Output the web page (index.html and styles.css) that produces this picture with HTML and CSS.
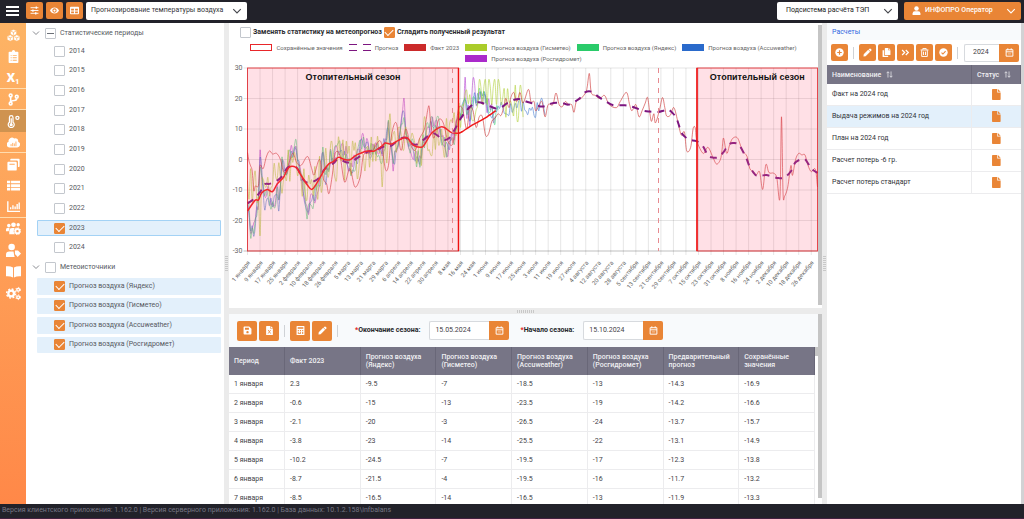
FILE: index.html
```html
<!DOCTYPE html>
<html lang="ru">
<head>
<meta charset="utf-8">
<title>Прогнозирование температуры воздуха</title>
<link rel="stylesheet" href="styles.css">
</head>
<body>
<svg class="sprite" aria-hidden="true">
  <symbol id="i-sliders" viewBox="0 0 16 16"><path d="M1 3h14M1 8h14M1 13h14" stroke="currentColor" stroke-width="1.6"/><path d="M10 1h2.4v4H10zM4 6h2.4v4H4zM9 11h2.4v4H9z" fill="currentColor"/></symbol>
  <symbol id="i-eye" viewBox="0 0 16 16"><path fill="currentColor" fill-rule="evenodd" d="M8 2.5C4.500 2.500 1.600 4.700 0 8c1.600 3.300 4.500 5.500 8 5.500s6.400-2.200 8-5.500c-1.600-3.300-4.500-5.500-8-5.500zM8 4.200a3.800 3.800 0 1 1 0 7.600 3.800 3.800 0 0 1 0-7.600zM8 6a2 2 0 1 0 0 4 2 2 0 0 0 0-4z"/></symbol>
  <symbol id="i-table" viewBox="0 0 16 16"><path fill="currentColor" fill-rule="evenodd" d="M1.500 1.500h13q1.500 0 1.500 1.500v10q0 1.500-1.500 1.500h-13Q0 14.500 0 13V3q0-1.500 1.500-1.500zM2 5v3h5V5zM9 5v3h5V5zM2 9.700v3h5v-3zM9 9.700v3h5v-3z"/></symbol>
  <symbol id="i-down" viewBox="0 0 16 16"><path d="M2 5l6 6 6-6" fill="none" stroke="currentColor" stroke-width="1.800"/></symbol>
  <symbol id="i-user" viewBox="0 0 16 16"><circle cx="8" cy="4.300" r="4" fill="currentColor"/><path fill="currentColor" d="M1 16v-2.500Q1 9.500 5 9.500h6q4 0 4 4V16z"/></symbol>
  <symbol id="i-cubes" viewBox="0 0 16 16"><path fill="currentColor" stroke="#fdb263" stroke-width=".7" d="M8 .5l3.800 1.700v4.400L8 8.300 4.200 6.600V2.200zM4 7.200l3.800 1.700v4.400L4 15.200.2 13.300V8.900zM12 7.200l3.800 1.700v4.400L12 15.200l-3.800-1.900V8.900z"/><path fill="none" stroke="#fdb263" stroke-width=".9" d="M5 2.800l3 1.300 3-1.300M8 4v3M1.200 9.500L4 10.800l3-1.300M4 11v3M9.200 9.500l2.800 1.300 3-1.300M12 11v3"/></symbol>
  <symbol id="i-clip" viewBox="0 0 16 16"><path fill="currentColor" fill-rule="evenodd" d="M3 2h3a2 2 0 0 1 4 0h3q1 0 1 1v12q0 1-1 1H3q-1 0-1-1V3q0-1 1-1zM4.500 6v1.200h1.200V6zM7 6v1.200h5V6zM4.500 9v1.200h1.200V9zM7 9v1.200h5V9zM4.500 12v1.200h1.200V12zM7 12v1.200h5V12z"/></symbol>
  <symbol id="i-branch" viewBox="0 0 16 16"><g fill="none" stroke="currentColor" stroke-width="2"><circle cx="4.500" cy="3" r="1.700"/><circle cx="12" cy="4.500" r="1.700"/><circle cx="4.500" cy="13" r="1.700"/><path d="M4.500 5v6M12 6.500q0 2.500-3 2.700-4 .3-4.300 2"/></g></symbol>
  <symbol id="i-thermo" viewBox="0 0 16 16"><path fill="none" stroke="currentColor" stroke-width="1.500" d="M3 8.800V3a2.200 2.200 0 0 1 4.400 0v5.800a3.700 3.700 0 1 1-4.400 0z"/><path stroke="currentColor" stroke-width="1.600" d="M5.200 4v7"/><circle cx="5.200" cy="12" r="1.900" fill="currentColor"/><circle cx="12.800" cy="3.500" r="1.900" fill="none" stroke="currentColor" stroke-width="1.600"/></symbol>
  <symbol id="i-cloud" viewBox="0 0 16 16"><path fill="currentColor" d="M3.500 14A3.500 3.500 0 0 1 2 7.200 4.200 4.200 0 0 1 8.800 3a3.500 3.500 0 0 1 4.900 4A3.600 3.600 0 0 1 12.700 14z"/><path stroke="#ffaa5b" stroke-width="1.100" d="M5 12.500V10M7 12.500V8.500M9 12.500V9.200M11 12.500V6.800"/></symbol>
  <symbol id="i-books" viewBox="0 0 16 16"><path fill="currentColor" d="M5 1h9.500q1 0 1 1v8q0 1-1 1h-1V4.500Q13.500 3 12 3H4V2q0-1 1-1z"/><path fill="currentColor" fill-rule="evenodd" d="M1.500 4.500h9q1.500 0 1.500 1.500v8q0 1.500-1.500 1.500h-9Q.5 15.500.5 14V6q0-1.500 1-1.500zM3 7v1.300h6.500V7z"/></symbol>
  <symbol id="i-list" viewBox="0 0 16 16"><path fill="currentColor" d="M0 2h4v3.300H0zM5 2h11v3.300H5zM0 6.400h4v3.300H0zM5 6.400h11v3.300H5zM0 10.800h4V14H0zM5 10.800h11V14H5z"/></symbol>
  <symbol id="i-bars" viewBox="0 0 16 16"><path fill="none" stroke="currentColor" stroke-width="1.700" d="M1 1.500V14h15"/><path stroke="currentColor" stroke-width="1.700" d="M4.500 11.500V9M7.300 11.500V6.500M10 11.500V8M12.500 11.500V5M15 11.500V3"/></symbol>
  <symbol id="i-group" viewBox="0 0 16 16"><g fill="currentColor"><circle cx="3" cy="4.800" r="1.900"/><circle cx="8" cy="4" r="2.500"/><circle cx="13" cy="4" r="1.800"/><path d="M0 11V9q0-1.800 2-1.800h2Q3 8.500 3 11zM3.500 14v-3q0-3.500 3-3.500h2.800Q7 11 9.500 14z"/></g><circle cx="12.200" cy="10.800" r="2.300" fill="none" stroke="currentColor" stroke-width="2"/><circle cx="12.200" cy="10.800" r="3.600" fill="none" stroke="currentColor" stroke-width="1" stroke-dasharray="1.400 1.400"/></symbol>
  <symbol id="i-usertag" viewBox="0 0 16 16"><g fill="currentColor"><circle cx="6" cy="4.300" r="3.500"/><path d="M0 15v-2.500Q0 9 3.500 9H8l1 5.500.5.500z"/><path d="M9.500 8h3.300l3.200 3.200-3.500 3.800-3-3.300z"/></g></symbol>
  <symbol id="i-book" viewBox="0 0 16 16"><path fill="currentColor" d="M0 2.500Q4.500 2 7.500 3.800v10.500Q4.500 12.700 0 13zM16 2.500Q11.500 2 8.500 3.800v10.500q3-1.600 7.500-1.300z"/></symbol>
  <symbol id="i-cogs" viewBox="0 0 16 16"><g fill="none" stroke="currentColor"><circle cx="5.500" cy="8" r="3" stroke-width="2.400"/><circle cx="5.500" cy="8" r="4.800" stroke-width="1.500" stroke-dasharray="2 1.770"/><circle cx="13" cy="4" r="1.500" stroke-width="1.500"/><circle cx="13" cy="4" r="2.500" stroke-width="1" stroke-dasharray="1.300 1.300"/><circle cx="13" cy="12" r="1.500" stroke-width="1.500"/><circle cx="13" cy="12" r="2.500" stroke-width="1" stroke-dasharray="1.300 1.300"/></g></symbol>
  <symbol id="i-save" viewBox="0 0 16 16"><path fill="currentColor" fill-rule="evenodd" d="M2.500 1H11l4 4v8.500q0 1.500-1.500 1.500h-11Q1 15 1 13.500v-11Q1 1 2.500 1zM3.500 3.300V6.500h7V3.300zM8 8.800a2.100 2.100 0 1 0 0 4.200 2.100 2.100 0 0 0 0-4.200z"/></symbol>
  <symbol id="i-excel" viewBox="0 0 16 16"><path fill="currentColor" d="M3 0h6v4.500h5V15q0 1-1 1H3q-1 0-1-1V1q0-1 1-1zM10 0l4 3.700h-4z"/><path stroke="#e98536" stroke-width="1.400" d="M5.500 7l4.600 6.500M10.100 7l-4.600 6.500"/></symbol>
  <symbol id="i-calc" viewBox="0 0 16 16"><path fill="currentColor" fill-rule="evenodd" d="M2 0h12q1 0 1 1v14q0 1-1 1H2q-1 0-1-1V1q0-1 1-1zM3 2v3h10V2zM3.200 7v1.800H5V7zM7 7v1.800h1.900V7zM11 7v1.800h1.800V7zM3.200 10.200V12H5v-1.800zM7 10.200V12h1.900v-1.800zM11 10.200v4h1.800v-4zM3.200 13v1.400h5.700V13z"/></symbol>
  <symbol id="i-pen" viewBox="0 0 16 16"><path fill="currentColor" d="M11.500 1.200q1-.9 2 0l1.400 1.400q.9 1 0 2L13.500 6 10 2.500zM9.200 3.300l3.500 3.500-8 8L.8 15.300l.5-4z"/></symbol>
  <symbol id="i-cal" viewBox="0 0 16 16"><path fill="none" stroke="currentColor" stroke-width="1.700" d="M2 3h12v11.500H2zM2 6.800h12M5 .5V4M11 .5V4"/><path stroke="currentColor" stroke-width="1" d="M5 10.500h6"/></symbol>
  <symbol id="i-plus" viewBox="0 0 16 16"><circle cx="8" cy="8" r="7.500" fill="currentColor"/><path d="M8 4v8M4 8h8" stroke="#e98536" stroke-width="2"/></symbol>
  <symbol id="i-copy" viewBox="0 0 16 16"><path fill="currentColor" d="M6 0h5v4h4v7.500q0 1-1 1H6q-1 0-1-1V1q0-1 1-1zM12 0l3 3h-3zM1 4h2.800v9.700H11V15q0 1-1 1H2q-1 0-1-1z"/></symbol>
  <symbol id="i-ff" viewBox="0 0 16 16"><path fill="none" stroke="currentColor" stroke-width="2.200" d="M2 3.500L6.500 8 2 12.500M8.500 3.500L13 8l-4.500 4.500"/></symbol>
  <symbol id="i-trash" viewBox="0 0 16 16"><path fill="none" stroke="currentColor" stroke-width="1.700" d="M1 3.500h14M5 3V1h6v2M3 4v11h10V4M6.200 6.500v6M9.800 6.500v6"/></symbol>
  <symbol id="i-ok" viewBox="0 0 16 16"><circle cx="8" cy="8" r="7.500" fill="currentColor"/><path d="M4.500 8.200l2.500 2.500 4.700-5" fill="none" stroke="#e98536" stroke-width="1.900"/></symbol>
  <symbol id="i-sort" viewBox="0 0 16 16"><path fill="none" stroke="currentColor" stroke-width="1.600" d="M4.500 15V2M1.500 5l3-3.500 3 3.500M11.500 1v13M8.500 11l3 3.500 3-3.500"/></symbol>
  <symbol id="i-file" viewBox="0 0 16 16"><path fill="currentColor" d="M2.500 0H9v5h5v10q0 1-1 1H2.500q-1 0-1-1V1q0-1 1-1zM10 0l4 4h-4z"/></symbol>
</svg>

<header class="topbar">
  <button class="burger" aria-label="Меню"><span></span><span></span><span></span></button>
  <button class="btn" aria-label="Настройки"><svg><use href="#i-sliders"/></svg></button>
  <button class="btn" aria-label="Показать"><svg><use href="#i-eye"/></svg></button>
  <button class="btn" aria-label="Таблица"><svg><use href="#i-table"/></svg></button>
  <div class="picker picker-page"><select aria-label="Раздел"><option>Прогнозирование температуры воздуха</option></select><svg><use href="#i-down"/></svg></div>
  <div class="picker picker-system"><select aria-label="Подсистема"><option>Подсистема расчёта ТЭП</option></select><svg><use href="#i-down"/></svg></div>
  <button class="user"><svg><use href="#i-user"/></svg><span>ИНФОПРО Оператор</span><svg><use href="#i-down"/></svg></button>
</header>

<main class="work">
  <nav class="rail" aria-label="Разделы">
    <button aria-label="Объекты"><svg><use href="#i-cubes"/></svg></button>
    <button aria-label="Задания"><svg><use href="#i-clip"/></svg></button>
    <button aria-label="Переменные" class="lined"><b>X<sub>1</sub></b></button>
    <button aria-label="Схема" class="lined"><svg><use href="#i-branch"/></svg></button>
    <button aria-label="Температура" class="active"><svg><use href="#i-thermo"/></svg></button>
    <button aria-label="Погода" class="lined"><svg><use href="#i-cloud"/></svg></button>
    <button aria-label="Справочники"><svg><use href="#i-books"/></svg></button>
    <button aria-label="Список"><svg><use href="#i-list"/></svg></button>
    <button aria-label="Графики" class="lined"><svg><use href="#i-bars"/></svg></button>
    <button aria-label="Группы"><svg class="wide"><use href="#i-group"/></svg></button>
    <button aria-label="Пользователь"><svg class="wide"><use href="#i-usertag"/></svg></button>
    <button aria-label="Справка"><svg class="wide"><use href="#i-book"/></svg></button>
    <button aria-label="Параметры"><svg class="wide"><use href="#i-cogs"/></svg></button>
  </nav>

  <aside class="tree">
    <div class="branch"><button aria-label="Свернуть"><svg><use href="#i-down"/></svg></button><label><input type="checkbox" id="periods">Статистические периоды</label></div>
    <ul class="years">
      <li><label><input type="checkbox">2014</label></li>
      <li><label><input type="checkbox">2015</label></li>
      <li><label><input type="checkbox">2016</label></li>
      <li><label><input type="checkbox">2017</label></li>
      <li><label><input type="checkbox">2018</label></li>
      <li><label><input type="checkbox">2019</label></li>
      <li><label><input type="checkbox">2020</label></li>
      <li><label><input type="checkbox">2021</label></li>
      <li><label><input type="checkbox">2022</label></li>
      <li class="on focus"><label><input type="checkbox" checked>2023</label></li>
      <li><label><input type="checkbox">2024</label></li>
    </ul>
    <div class="branch"><button aria-label="Свернуть"><svg><use href="#i-down"/></svg></button><label><input type="checkbox">Метеоисточники</label></div>
    <ul class="sources">
      <li class="on"><label><input type="checkbox" checked>Прогноз воздуха (Яндекс)</label></li>
      <li class="on"><label><input type="checkbox" checked>Прогноз воздуха (Гисметео)</label></li>
      <li class="on"><label><input type="checkbox" checked>Прогноз воздуха (Accuweather)</label></li>
      <li class="on"><label><input type="checkbox" checked>Прогноз воздуха (Росгидромет)</label></li>
    </ul>
  </aside>
  <div class="split split-v"><i></i></div>

  <section class="center">
    <div class="chart-pane">
      <div class="chart-body">
        <div class="options">
          <label><input type="checkbox">Заменять статистику на метеопрогноз</label>
          <label><input type="checkbox" checked>Сгладить полученный результат</label>
        </div>
        <ul class="legend">
          <li><i class="sw sw-saved"></i>Сохранённые значения</li>
          <li><i class="sw sw-forecast"></i>Прогноз</li>
          <li><i class="sw sw-fact"></i>Факт 2023</li>
          <li><i class="sw sw-gis"></i>Прогноз воздуха (Гисметео)</li>
          <li><i class="sw sw-yandex"></i>Прогноз воздуха (Яндекс)</li>
          <li><i class="sw sw-accu"></i>Прогноз воздуха (Accuweather)</li>
          <li><i class="sw sw-ros"></i>Прогноз воздуха (Росгидромет)</li>
        </ul>
        <svg class="plot" id="plot" viewBox="0 0 589 240" role="img" aria-label="График температуры воздуха"></svg>
      </div>
      <div class="scroll"><i></i></div>
    </div>
    <div class="split split-h"><i></i></div>
    <div class="grid-pane">
      <div class="grid-body">
        <div class="toolbar">
          <button class="btn" aria-label="Сохранить"><svg><use href="#i-save"/></svg></button>
          <button class="btn" aria-label="Экспорт в Excel"><svg><use href="#i-excel"/></svg></button>
          <i class="sep"></i>
          <button class="btn" aria-label="Рассчитать"><svg><use href="#i-calc"/></svg></button>
          <button class="btn" aria-label="Изменить"><svg><use href="#i-pen"/></svg></button>
          <i class="sep"></i>
          <label for="season-end"><em>*</em>Окончание сезона:</label>
          <div class="date"><input id="season-end" value="15.05.2024"><button aria-label="Календарь"><svg><use href="#i-cal"/></svg></button></div>
          <label for="season-start"><em>*</em>Начало сезона:</label>
          <div class="date"><input id="season-start" value="15.10.2024"><button aria-label="Календарь"><svg><use href="#i-cal"/></svg></button></div>
        </div>
        <div class="table-wrap">
        <table class="temps">
          <thead><tr><th class="c-day">Период</th><th>Факт 2023</th><th>Прогноз воздуха (Яндекс)</th><th>Прогноз воздуха (Гисметео)</th><th>Прогноз воздуха (Accuweather)</th><th>Прогноз воздуха (Росгидромет)</th><th>Предварительный прогноз</th><th>Сохранённые значения</th></tr></thead>
          <tbody>
            <tr><td>1 января</td><td>2.3</td><td>-9.5</td><td>-7</td><td>-18.5</td><td>-13</td><td>-14.3</td><td>-16.9</td></tr>
            <tr><td>2 января</td><td>-0.6</td><td>-15</td><td>-13</td><td>-23.5</td><td>-19</td><td>-14.2</td><td>-16.6</td></tr>
            <tr><td>3 января</td><td>-2.1</td><td>-20</td><td>-3</td><td>-26.5</td><td>-24</td><td>-13.7</td><td>-15.7</td></tr>
            <tr><td>4 января</td><td>-3.8</td><td>-23</td><td>-14</td><td>-25.5</td><td>-22</td><td>-13.1</td><td>-14.9</td></tr>
            <tr><td>5 января</td><td>-10.2</td><td>-24.5</td><td>-7</td><td>-19.5</td><td>-17</td><td>-12.3</td><td>-13.8</td></tr>
            <tr><td>6 января</td><td>-8.7</td><td>-21.5</td><td>-4</td><td>-19.5</td><td>-16</td><td>-11.7</td><td>-13.2</td></tr>
            <tr><td>7 января</td><td>-8.5</td><td>-16.5</td><td>-14</td><td>-16.5</td><td>-13</td><td>-11.9</td><td>-13.3</td></tr>
          </tbody>
        </table>
        <div class="thumb"></div>
        </div>
      </div>
      <div class="scroll"><i></i></div>
    </div>
  </section>
  <div class="split split-v"><i></i></div>

  <aside class="calcs">
    <h2>Расчеты</h2>
    <div class="tools">
      <button class="btn" aria-label="Добавить"><svg><use href="#i-plus"/></svg></button>
      <i class="sep"></i>
      <button class="btn" aria-label="Изменить"><svg><use href="#i-pen"/></svg></button>
      <button class="btn" aria-label="Копировать"><svg><use href="#i-copy"/></svg></button>
      <button class="btn" aria-label="Выполнить"><svg><use href="#i-ff"/></svg></button>
      <button class="btn" aria-label="Удалить"><svg><use href="#i-trash"/></svg></button>
      <button class="btn" aria-label="Утвердить"><svg><use href="#i-ok"/></svg></button>
      <i class="sep"></i>
      <div class="date year"><input aria-label="Год" value="2024"><button aria-label="Календарь"><svg><use href="#i-cal"/></svg></button></div>
    </div>
    <table class="list">
      <thead><tr><th>Наименование <svg><use href="#i-sort"/></svg></th><th class="c-state">Статус <svg><use href="#i-sort"/></svg></th></tr></thead>
      <tbody>
        <tr><td>Факт на 2024 год</td><td><svg><use href="#i-file"/></svg></td></tr>
        <tr class="on"><td>Выдача режимов на 2024 год</td><td><svg><use href="#i-file"/></svg></td></tr>
        <tr><td>План на 2024 год</td><td><svg><use href="#i-file"/></svg></td></tr>
        <tr><td>Расчет потерь -6 гр.</td><td><svg><use href="#i-file"/></svg></td></tr>
        <tr><td>Расчет потерь стандарт</td><td><svg><use href="#i-file"/></svg></td></tr>
      </tbody>
    </table>
  </aside>
  <div class="edge"></div>
</main>

<footer class="status">Версия клиентского приложения: 1.162.0 | Версия серверного приложения: 1.162.0 | База данных: 10.1.2.158\infbalans</footer>
<script src="chart.js"></script>
</body>
</html>
```

FILE: styles.css
```css
* { box-sizing: border-box; }
body { margin: 0; height: 100vh; display: flex; flex-direction: column; overflow: hidden; font: 7px/9px Roboto, "Liberation Sans", sans-serif; color: #3f4247; background: #fff; }
button, input, select { font: inherit; color: inherit; margin: 0; padding: 0; border: 0; background: none; }
ul { list-style: none; margin: 0; padding: 0; }
svg { display: block; flex: none; }
.sprite { display: none; }

.btn { display: grid; place-items: center; flex: none; width: 17px; height: 17px; border-radius: 2px; background: #e98536; color: #fff; }
.btn svg { width: 9px; height: 9px; }
.sep { flex: none; width: 1px; height: 12px; background: #cfd2d6; }

/* top bar */
.topbar { flex: none; display: flex; align-items: center; gap: 3px; height: 23px; padding: 0 3px 2px 6px; background: #22222a; }
.burger { display: flex; flex-direction: column; gap: 2px; width: 13px; margin-right: 4px; }
.burger span { height: 2px; background: #fff; }
.picker { position: relative; height: 18px; }
.picker select { appearance: none; width: 100%; height: 100%; padding: 0 16px 0 5px; border-radius: 2px; background: #fff; color: #34363b; }
.picker svg { position: absolute; right: 5px; top: 4px; width: 10px; height: 10px; pointer-events: none; color: #44464c; }
.picker-page { width: 161px; }
.picker-system { width: 121px; margin-left: auto; }
.picker-system select { padding-left: 9px; color: #222; }
.user { display: flex; align-items: center; gap: 4px; width: 117px; height: 18px; margin-left: 3px; padding: 0 5px 0 8px; border-radius: 2px; background: #e98536; color: #fff; font-weight: 500; }
.user svg { width: 9px; height: 9px; }
.user svg:last-child { width: 10px; height: 10px; margin-left: auto; }

/* page frame */
.work { flex: 1; min-height: 0; display: grid; grid-template-columns: 26px 198px 5px 1fr 5px 194px 3px; grid-template-rows: 100%; }
.rail { display: grid; grid-template-rows: repeat(6, 22px 21px) 22px; align-content: start; padding-top: 1px; background: linear-gradient(#fdb465, #ff8848); color: #fff; }
.rail button { display: grid; place-items: center; }
.rail svg { width: 13px; height: 13px; }
.rail .wide { width: 15px; height: 15px; }
.rail b { font: 900 13px/13px Roboto, sans-serif; }
.rail sub { font-size: 7px; line-height: 0; vertical-align: -2px; }
.rail .lined { border-bottom: 1px solid #ffdcae; }
.rail .active { background: #cf9350; }
.split { display: flex; align-items: center; justify-content: center; background: #ebebeb; }
.split-v i { width: 3px; height: 16px; background: repeating-linear-gradient(#c8c8c8 0 1px, #ebebeb 1px 2px); }
.split-h { height: 6px; }
.split-h i { width: 18px; height: 3px; background: repeating-linear-gradient(90deg, #c8c8c8 0 1px, #ebebeb 1px 2px); }
.edge { background: #d2d2d4; }

/* check boxes */
input[type="checkbox"] { appearance: none; flex: none; display: grid; place-items: center; width: 11px; height: 11px; border: 1px solid #c3c7cd; border-radius: 1px; background: #fff; }
input[type="checkbox"]:checked { border-color: #e98536; background: #e98536; }
input[type="checkbox"]:checked::after { content: ""; width: 7px; height: 4px; margin-bottom: 2px; border: solid #fff; border-width: 0 0 1px 1px; transform: rotate(-45deg); }
input[type="checkbox"]:indeterminate::after { content: ""; width: 7px; height: 1px; background: #6c7077; }
label { display: flex; align-items: center; }

/* tree */
.tree { padding: 0 3px 0 11px; color: #55585e; }
.tree label { gap: 4px; }
.branch { display: flex; align-items: center; height: 22px; }
.branch:first-child { height: 20px; }
.branch button { width: 8px; }
.branch button svg { width: 8px; height: 8px; margin-left: -5px; color: #7a7d83; }
.years, .sources { display: grid; grid-auto-rows: 1fr; row-gap: 3px; }
.years { min-height: 213px; }
.sources { min-height: 75px; }
.tree li { display: flex; align-items: center; padding-left: 17px; border-radius: 1px; }
.tree .on { background: #e3f0fb; }
.tree .focus { outline: 1px solid #a3d2f5; outline-offset: -1px; }

/* chart */
.center { display: flex; flex-direction: column; min-width: 0; min-height: 0; }
.chart-pane, .grid-pane { display: flex; min-height: 0; }
.chart-pane { flex: none; }
.grid-pane { flex: 1; overflow: hidden; }
.chart-body, .grid-body { flex: 1; min-width: 0; }
.chart-body { padding-bottom: 4px; }
.scroll { width: 4px; padding: 2px 0 3px; }
.scroll i { display: block; height: 100%; background: #c5c5c5; }
.grid-pane .scroll { padding: 0 0 6px; }
.options { display: flex; gap: 2px; padding: 4px 11px; font-weight: 700; color: #2b2c30; }
.options label { gap: 2px; }
.legend { display: flex; flex-wrap: wrap; justify-content: center; column-gap: 6px; padding: 0 15px; font-size: 6px; line-height: 11px; color: #666; }
.legend li { display: flex; align-items: center; gap: 4px; }
.sw { width: 22px; height: 7px; }
.sw-saved { border: 1px solid #e8262a; }
.sw-forecast { background: repeating-linear-gradient(90deg, #7d1680 0 8px, transparent 8px 14px) top / 100% 1px no-repeat, repeating-linear-gradient(90deg, #7d1680 0 8px, transparent 8px 14px) bottom / 100% 1px no-repeat; }
.sw-fact { background: #cb2a2a; }
.sw-gis { background: #aacc2a; }
.sw-yandex { background: #2acb6a; }
.sw-accu { background: #2a6acb; }
.sw-ros { background: #aa2acb; }
.plot { width: 100%; height: auto; }
.plot text { font: 6px Roboto, sans-serif; fill: #666; }
.plot .tick { font-size: 7px; }
.plot .caption { font: 700 9px "Liberation Sans", sans-serif; fill: #111; }

/* season toolbar and temperatures */
.toolbar { display: flex; align-items: center; gap: 2px; height: 33px; padding: 0 8px; background: #f8fafc; font-weight: 700; color: #26272b; }
.toolbar .btn { width: 20px; height: 20px; }
.toolbar .sep { margin: 0 3px; }
.toolbar label { margin: 0 7px 0 12px; }
.toolbar .date + label { margin-left: 9px; }
.toolbar em { font-style: normal; color: #e02020; }
.date { display: flex; width: 80px; height: 19px; font-weight: 400; }
.date input { flex: 1; width: 0; padding: 0 5px; border: 1px solid #d7dade; border-right: 0; border-radius: 2px 0 0 2px; background: #fff; color: #3f4247; }
.date button { display: grid; place-items: center; width: 20px; border-radius: 0 2px 2px 0; background: #e98536; color: #fff; }
.date svg { width: 9px; height: 9px; }
table { border-collapse: separate; border-spacing: 0; table-layout: fixed; width: 100%; }
th { background: #777586; color: #f0f0f3; font-weight: 500; text-align: left; line-height: 8px; border-right: 1px solid #696778; }
th, td { padding: 0 5px; }
.table-wrap { display: grid; grid-template-columns: 1fr 3px; }
.thumb { height: 9px; background: #c5c5c5; }
.temps th { height: 28px; }
.temps td { height: 19px; border-right: 1px solid #ececee; border-bottom: 1px solid #ececee; }
.temps .c-day { width: 56px; }

/* calculations */
.calcs { min-width: 0; }
.calcs h2 { margin: 0; padding: 5px 5px 3px; font-size: 7px; line-height: 9px; font-weight: 400; color: #2f66e0; background: #f8fafc; }
.tools { display: flex; align-items: center; gap: 2px; height: 25px; padding: 0 2px 0 4px; }
.tools .sep { margin: 0 3px; }
.tools .date { width: 55px; height: 18px; margin-left: auto; }
.tools .date input { padding: 0 8px; }
.list th { height: 19px; }
.list td { height: 22px; border-bottom: 1px solid #ececee; color: #303237; }
.list td:first-child { border-right: 1px solid #ececee; }
.list .c-state { width: 49px; }
.list th svg { display: inline-block; width: 7px; height: 7px; margin-left: 3px; vertical-align: -1px; }
.list td svg { width: 11px; height: 11px; margin: 0 auto; color: #e98536; }
.list .on td { background: #e3f0fb; }

.status { flex: none; height: 15px; padding: 2px; background: #22222a; border-bottom: 1px solid #43203f; color: #777785; }
```

FILE: chart.js
```js
const X0 = 18.5, W = 570, Y0 = 4, H = 183, DAYS = 364;
const px = d => X0 + d * W / DAYS;
const py = t => Y0 + (30 - t) * H / 60;

// [day, temperature, day, temperature, ...]
const saved = [0,-16.9,4.8,-13.4,7,-13.3,9,-11,12.5,-9.8,16,-10.5,19,-8,23,-5.8,26.5,-2.6,31,-2.6,33.5,-4.6,38,-8.2,41,-9.8,44,-8,49.5,-3,52,-1.4,55,-.6,58,.7,62,0,65.5,-.1,69,1.3,75,2.6,77,2.8,81,2.8,86,4.5,88,5.4,92,5.1,96,6.2,101.6,7.2,106,4.6,111,4,113,4.9,117.5,8.6,123,10.6,126,10.4,130,8.9,134.6,8.6,137,9.1,142,10.8,148,12.5,153,14,158.5,16];
const forecast = [0,-14.4,4,-13,8,-10.7,11,-8.1,14,-8,18.6,-7,22,-5.5,26,-2.5,31.4,-2.7,35.6,-6.6,39,-7.7,43,-7,46,-5.8,49.5,-3,55,-1.2,58,.2,63,-.9,66.5,-.7,71,.8,77,2.6,81,3,86,4,89,4.6,92,4.6,96,6.2,100.5,7.2,105,5.2,108,4.9,113,6.7,118.6,8.6,125,6.5,129,7.1,132.5,10,135.6,13,139,15.5,143,17.7,147.3,18.8,151.6,18.2,158,16.8,162,17.1,166.5,18.7,171,19.7,174,19.8,178,19,182.5,18.3,187,17.4,190,17.5,193,18.2,197.4,18.6,201.7,18.4,205,18,209,19,212,20,215.5,22,220,22.2,224,20.6,228,19.3,233.6,17.8,241,17.8,246.3,17.2,252.7,16,257,15.7,262.3,15.6,265.5,16,268,16.5,271,15.5,274,13.4,277,9,279.3,7.5,282.5,6.4,286.8,6,291,4.2,294,1.3,297.4,.6,300.6,.8,304,2.4,307,4.8,310,5.4,313.4,5.1,315.5,3.5,318.7,.2,320.4,-2,323,-4.2,325,-5.3,328,-5.3,331.4,-5.1,335.7,-5.7,339,-6.1,343,-5.9,347.4,-3.6,350,-.9,355,.2,357,-.5,360,-3,364,-4.4];
const fact = [0,2.3,1,-.6,2,-2.1,3,-3.8,4,-10.2,5,-8.7,7,-8.5,8,-2,10,-3,12,.8,14,2.8,16,1.8,18.6,2,21,0,23,-4,25,-3.6,27,-.3,29,2,31.4,-1,33.5,-2,35,-1.5,38.4,1,41,-3,42.6,-5,46,0,48.4,-6.3,50.5,-8,52,-11.2,54,-5.7,56,2,59,1.3,62,-7.4,65.4,-3,68.6,-9,72,-5.7,74,1.3,77,2,80,3,85,6,88,-3,90,-2,92,8,95,12,98,3,101,10,104,5,107,3,110,7,113,10,115,16,116,17.4,117,12,119,7,122,13,125,12,128,6,131,5,133,11,135,17,137,17,138,15,140,10,142,17,144,16,146,10.5,148,14,150,14,152,8,154,8.5,156,12.5,158,13.5,160,15,162,14.5,164,18,165,20,167,17,168,20,170,22,172,19,174,22,176,18.5,179.4,23,181,19,183,19,184,16,186,17.5,188,19,190,14,192,18,195,18,197,21.8,199,18,201,17.3,203,19,205,18,207,18,208.5,15.5,210,19,213,20,216,22,217,24,218.3,28.2,219.5,22,222,21,225,20,228,21,231,18,235.6,17,238,19,242,22,244,18,245.5,16,248,18,250,14,252,16,254,18.5,255.5,20.3,257,15,258,12.5,259.5,15,260.5,12,263,16,265,20.3,266.5,17,267.6,14.3,270,14.5,272.3,17,275,12,277,8,279,9,280.5,2.8,283,4,284.6,10.2,286,10.2,287,6,291,2,294,4,297,1,299.5,-1.5,302,0,303,3,304,7,306,2,308,5,310,7,313,7,316,3,319,1,320.8,-3,323,-4,325,-5,327,-4,329,-9.8,331,-1.7,333,-4.3,336,-4.5,338,-6,340,-12.6,341,14,342,-11,343,-12,345,-9,347,-2,348,-5.2,350,0,352,2,354,1.5,356,1.5,358,-2,360,-4,362,-3,363,-4,364,-9];
const weather = [0,-12,2,-25,4,-23,7,-13,8,0,11,-15,13,-11,16,-16,19,-10,20,-15,22,-1,25,-4,28,3,31,3,34,-5,38,-17,41,-13,44,-11,46,-9,48,1,50,-6,53,1,55,0,58,3,62,3,66,-3,70,1,74,6,78,2,82,4,86,2,90,12,93,-1,96,5,99.5,15,103,6,107,1,110,0,113,7,118,11,121,12,125,5,128,3,132,8,135,15,139,18,142,14,145,20,150,21,154,17,158,14,162,17,167,17,172,18,176,17,180,16,184,16,188,18,190,17];
const rosPeaks = { 8: 3, 74: 8, 99: 16, 100: 20, 139: 27, 144: 26.5, 145: 25 };

const at = (s, d) => {
  let i = 0;
  while (i + 4 < s.length && s[i + 2] < d) i += 2;
  const k = (d - s[i]) / (s[i + 2] - s[i]);
  return s[i + 1] + (s[i + 3] - s[i + 1]) * Math.min(k, 1);
};

const vary = (base, end, seed, amp, peaks = {}) => {
  const out = [];
  let r = seed;
  for (let d = 0; d <= end; d++) {
    r = (r * 16807) % 2147483647;
    out.push(d, peaks[d] ?? at(base, d) + (r / 2147483647 - .5) * amp);
  }
  return out;
};

const gis = vary(forecast, 176, 771, 14);
for (let d = 0; d <= 176; d++) if (d > 146 && d < 163) gis[d * 2 + 1] = d % 3 ? 26 - d % 2 * 2 : 18;
[-7, -13, -3, -14, -7, -4, -14].forEach((t, d) => { gis[d * 2 + 1] = t; });
Object.entries({ 8: -25, 12: -9, 86: -9, 91: 15, 111: -2, 113: 14 }).forEach(([d, t]) => { gis[d * 2 + 1] = t; });

// smooth cubic joins through every point
const curve = s => {
  let p = `M${px(s[0])} ${py(s[1])}`;
  for (let i = 2; i < s.length; i += 2) {
    const prev = i > 2 ? i - 4 : 0, next = Math.min(i + 2, s.length - 2);
    const c1x = px(s[i - 2]) + (px(s[i]) - px(s[prev])) / 6;
    const c1y = py(s[i - 1]) + (py(s[i + 1]) - py(s[prev + 1])) / 6;
    const c2x = px(s[i]) - (px(s[next]) - px(s[i - 2])) / 6;
    const c2y = py(s[i + 1]) - (py(s[next + 1]) - py(s[i - 1])) / 6;
    p += `C${c1x} ${c1y} ${c2x} ${c2y} ${px(s[i])} ${py(s[i + 1])}`;
  }
  return p;
};
const line = (s, color, extra = '') => `<path d="${curve(s)}" fill="none" stroke="${color}" ${extra}/>`;

const labels = ['1 января','9 января','17 января','25 января','2 февраля','10 февраля','18 февраля','26 февраля','5 марта','13 марта','21 марта','29 марта','6 апреля','14 апреля','22 апреля','30 апреля','8 мая','16 мая','24 мая','1 июня','9 июня','17 июня','25 июня','3 июля','11 июля','19 июля','27 июля','4 августа','12 августа','20 августа','28 августа','5 сентября','13 сентября','21 сентября','29 сентября','7 октября','15 октября','23 октября','31 октября','8 ноября','16 ноября','24 ноября','2 декабря','10 декабря','18 декабря','26 декабря'];

let out = '';
labels.forEach((t, i) => {
  const x = px(i * 8);
  out += `<path d="M${x} ${Y0}V${Y0 + H + 4}" stroke="#000" stroke-opacity=".1"/>`;
  out += `<text x="${x + 3}" y="${Y0 + H + 12}" text-anchor="end" transform="rotate(-50 ${x + 3} ${Y0 + H + 12})">${t}</text>`;
});
for (let t = 30; t >= -30; t -= 10) {
  out += `<path d="M${X0 - 4} ${py(t)}H${X0 + W}" stroke="#000" stroke-opacity="${t === -30 ? .25 : .1}"/>`;
  out += `<text class="tick" x="${X0 - 5}" y="${py(t) + 2}" text-anchor="end">${t}</text>`;
}
out += line(vary(weather, 158, 4711, 6, rosPeaks), '#aa2acb', 'stroke-width=".7" stroke-opacity=".75"');
out += line(vary(weather, 190, 9203, 5), '#2a6acb', 'stroke-width=".7" stroke-opacity=".75"');
out += line(vary(weather, 160, 31337, 7), '#2acb6a', 'stroke-width=".7" stroke-opacity=".75"');
out += line(gis, '#aacc2a', 'stroke-width=".7" stroke-opacity=".8"');
out += line(fact, '#cb2a2a', 'stroke-width=".7" stroke-opacity=".85"');
out += line(forecast, '#7d1680', 'stroke-width="2" stroke-dasharray="7 6"');
out += line(saved, '#f01818', 'stroke-width="1.500"');

const season = (a, b) => `<rect x="${a}" y="${Y0}" width="${b - a}" height="${H}" fill="#ff6384" fill-opacity=".2" stroke="#e01c22" stroke-opacity=".8"/><text class="caption" x="${(a + b) / 2}" y="16" text-anchor="middle">Отопительный сезон</text>`;
out += season(X0, 229.5) + season(468, X0 + W);
out += `<path d="M229.500 ${Y0}V${Y0 + H}M468 ${Y0}V${Y0 + H}" stroke="#f01010" stroke-width="1.500"/>`;
out += `<path d="M223.500 ${Y0}V${Y0 + H}M429.500 ${Y0}V${Y0 + H}" stroke="#e88a90" stroke-dasharray="5 5"/>`;
document.getElementById('plot').innerHTML = out;
document.getElementById('periods').indeterminate = true;
```
